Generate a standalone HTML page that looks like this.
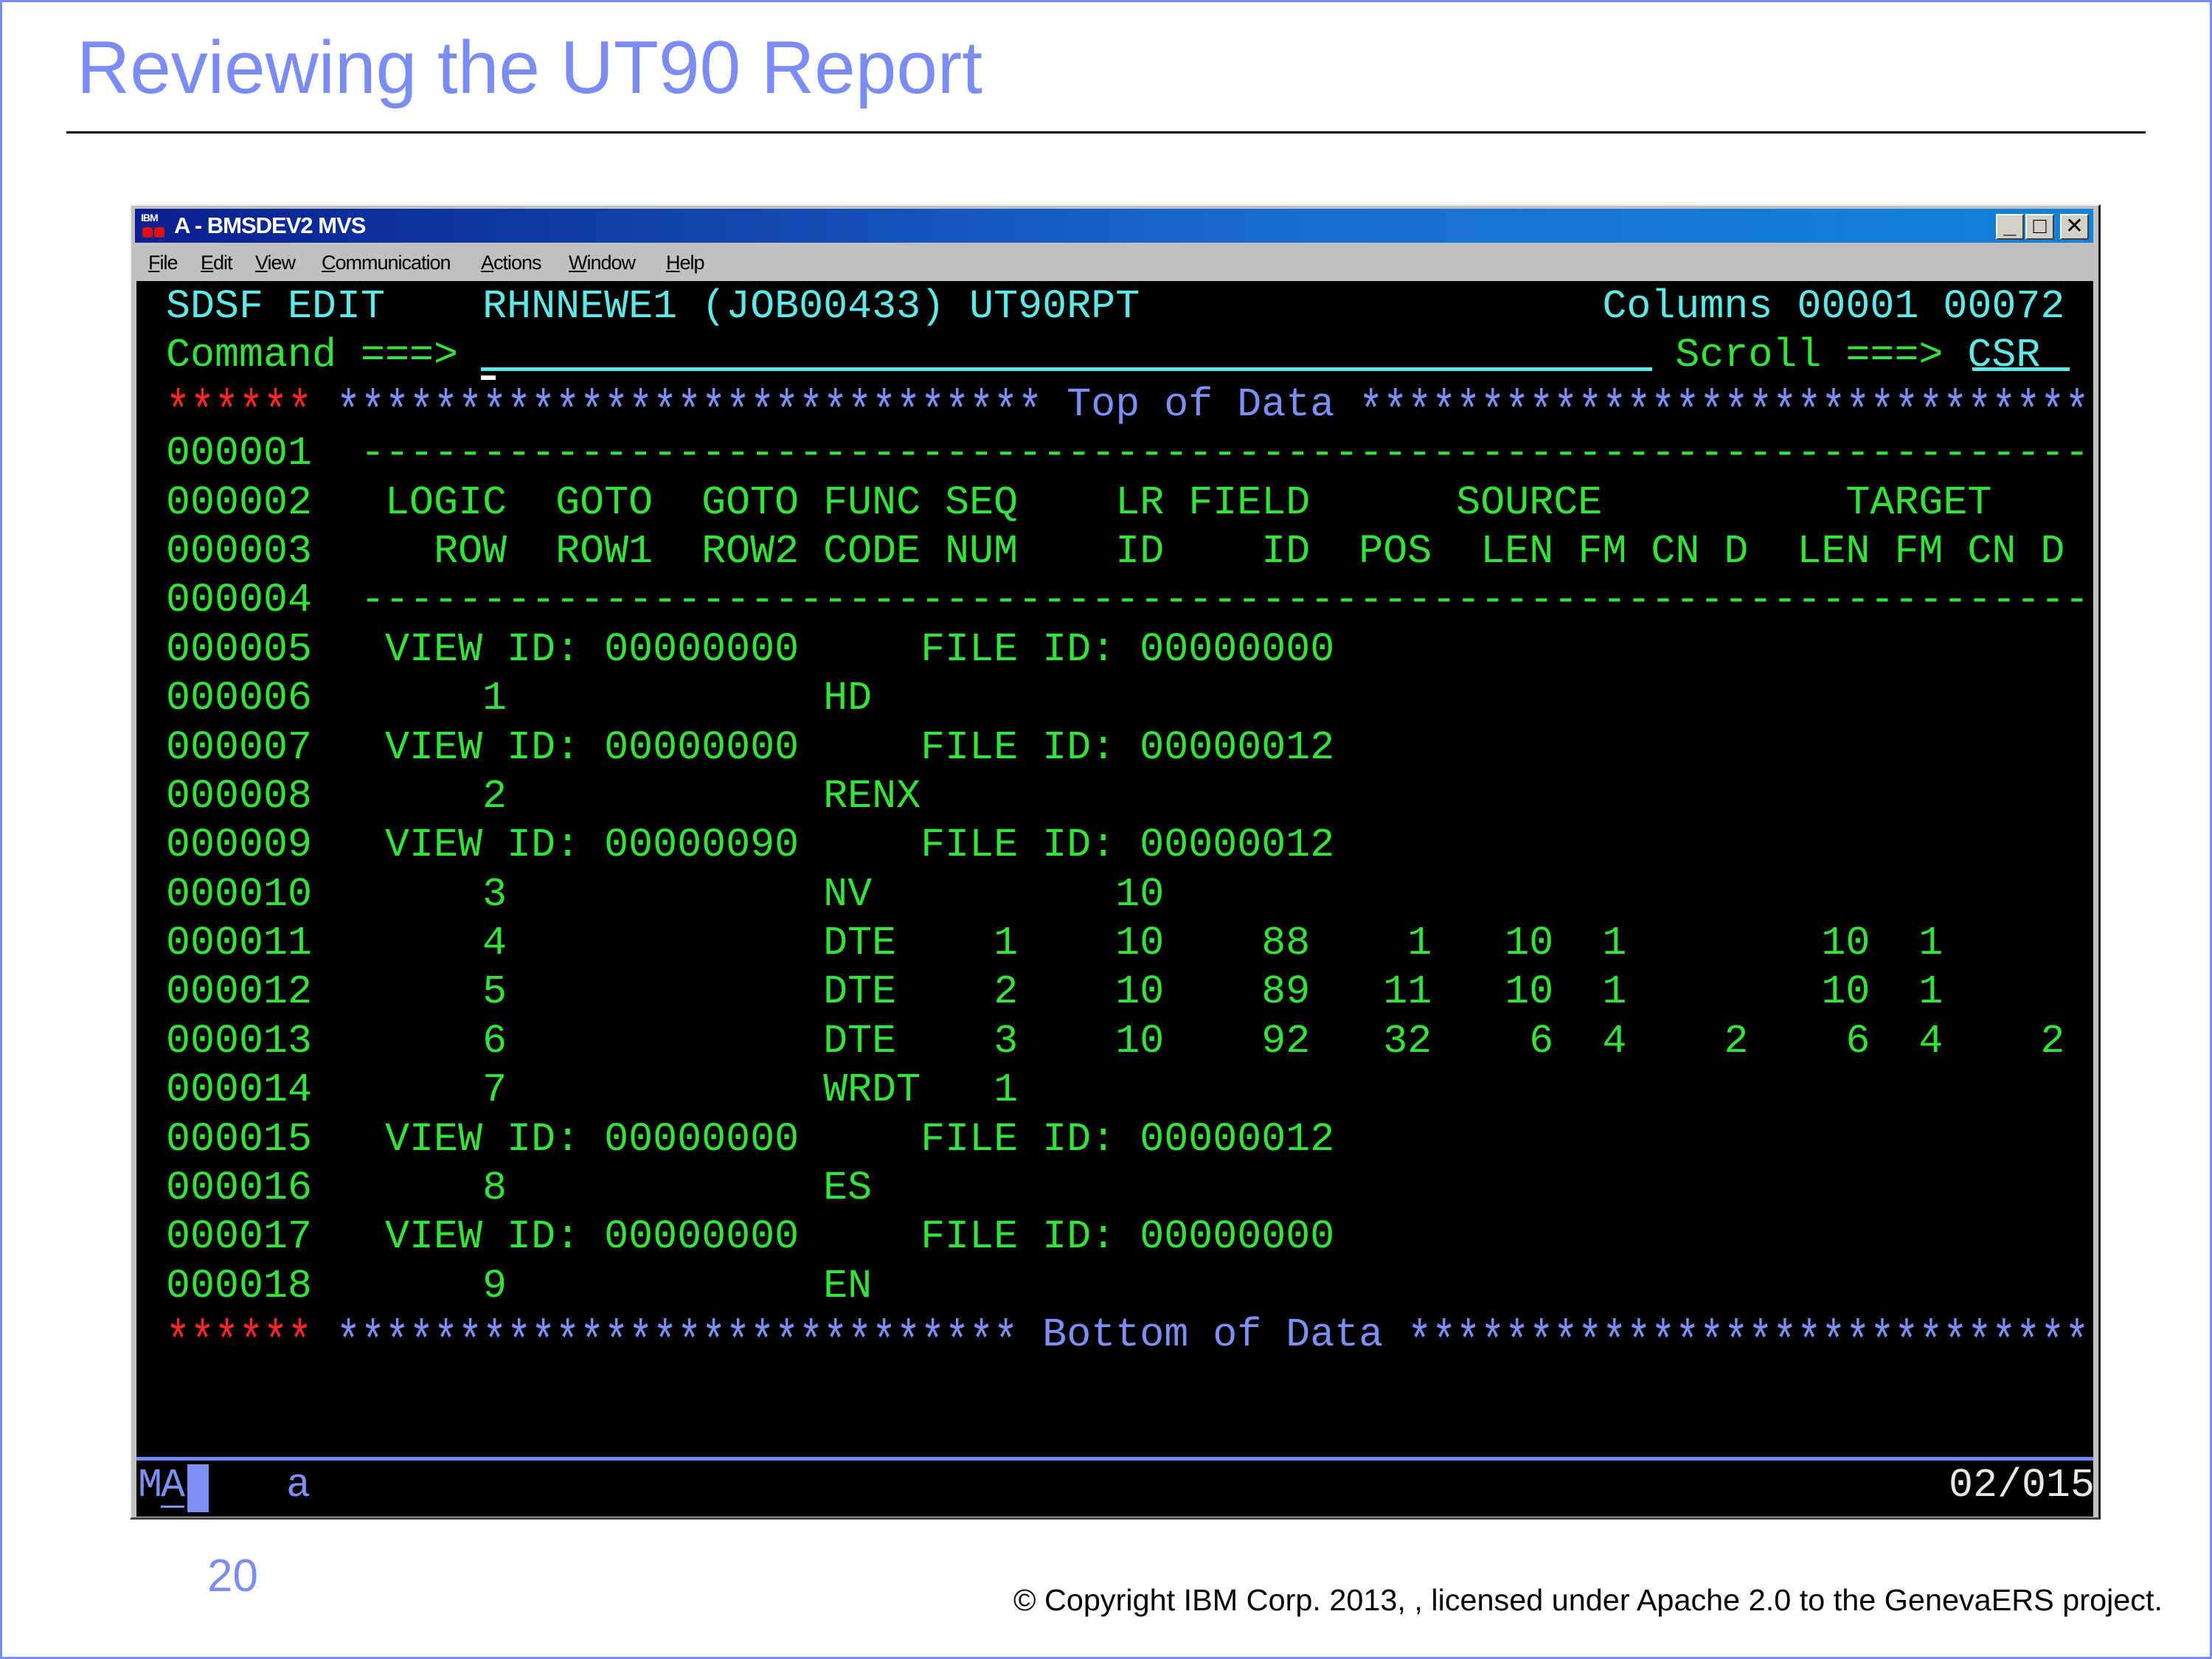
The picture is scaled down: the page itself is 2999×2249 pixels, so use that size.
<!DOCTYPE html>
<html><head><meta charset="utf-8"><style>
html,body{margin:0;padding:0}
body{width:2999px;height:2249px;position:relative;overflow:hidden;background:#fff;font-family:"Liberation Sans",sans-serif}
.frame{position:absolute;left:0;top:0;width:2993px;height:2243px;border:3px solid #7b8cf8}
.rule{position:absolute;left:90px;top:178px;width:2819px;height:3px;background:#000}
.win{position:absolute;left:176px;top:277px;width:2672px;height:1783px;background:#c0c0c0;border-right:3px solid #222;border-bottom:3px solid #444;box-sizing:border-box;border-top:2px solid #eee;border-left:2px solid #eee}
.tbar{position:absolute;left:183px;top:283px;width:2655px;height:46px;background:linear-gradient(90deg,#0a1f8f,#1a6fd0 60%,#1084d8)}
.ttl{position:absolute;left:236px;top:286px;color:#fff;font-weight:bold;font-size:31px;line-height:40px;letter-spacing:-1px}
.btn{position:absolute;top:290px;height:35px;background:#d4d0c8;border:2px solid;border-color:#fff #404040 #404040 #fff;box-sizing:border-box;font-size:30px;line-height:30px;text-align:center;color:#000;font-weight:bold}
.menu{position:absolute;top:338px;font-size:27px;line-height:36px;color:#000;letter-spacing:-1px}
.term{position:absolute;left:185px;top:381px;width:2653px;height:1675px;background:#000}
.t{position:absolute;left:192px;top:383px;font-family:"Liberation Mono",monospace;font-size:55px;line-height:66.4px}
.t div{position:relative;height:66.4px}
.t b,.st b{position:absolute;top:0;font-weight:normal;white-space:pre}
.t b.s{transform:translateY(12px) scaleY(1.35);transform-origin:0 50%}
.g{color:#33e33a}.c{color:#5ee8e8}.r{color:#ff2626}.bl{color:#7d8ef5}
.st{position:absolute;left:187px;top:1981px;width:2653px;height:66px;font-family:'Liberation Mono',monospace;font-size:55px;line-height:66px}
</style></head><body>
<div class="frame"></div>
<svg width="2999" height="2249" style="position:absolute;left:0;top:0">
<text x="104" y="126" font-family="Liberation Sans" font-size="101" fill="#7b8cf5" textLength="1228" lengthAdjust="spacingAndGlyphs">Reviewing the UT90 Report</text>
<text x="281" y="2157" font-family="Liberation Sans" font-size="62" fill="#7b8cf5">20</text>
<text x="1374" y="2183" font-family="Liberation Sans" font-size="41" fill="#000" textLength="1558" lengthAdjust="spacingAndGlyphs">© Copyright IBM Corp. 2013, , licensed under Apache 2.0 to the GenevaERS project.</text>
</svg>
<div class="rule"></div>
<div class="win"></div>
<div class="tbar"></div>
<div style="position:absolute;left:191px;top:288px;width:36px;height:36px">
<div style="position:absolute;left:0;top:0;color:#fff;font-size:14px;font-weight:bold;line-height:14px;letter-spacing:-1px">IBM</div>
<div style="position:absolute;left:2px;top:20px;width:14px;height:14px;background:#e01010;border-radius:3px"></div>
<div style="position:absolute;left:18px;top:20px;width:14px;height:14px;background:#e01010;border-radius:3px"></div>
</div>
<div class="ttl">A - BMSDEV2 MVS</div>
<div class="btn" style="left:2706px;width:38px">_</div>
<div class="btn" style="left:2746px;width:39px;font-weight:normal">□</div>
<div class="btn" style="left:2793px;width:39px;font-weight:normal">✕</div>
<div class="menu" style="left:201px"><u>F</u>ile</div>
<div class="menu" style="left:272px"><u>E</u>dit</div>
<div class="menu" style="left:346px"><u>V</u>iew</div>
<div class="menu" style="left:436px"><u>C</u>ommunication</div>
<div class="menu" style="left:652px"><u>A</u>ctions</div>
<div class="menu" style="left:771px"><u>W</u>indow</div>
<div class="menu" style="left:903px"><u>H</u>elp</div>
<div class="term"></div>
<div style="position:absolute;left:652px;top:498px;width:1588px;height:5px;background:#5ee8e8"></div>
<div style="position:absolute;left:652px;top:509px;width:20px;height:6px;background:#fff"></div>
<div style="position:absolute;left:2674px;top:498px;width:132px;height:5px;background:#5ee8e8"></div>
<div style="position:absolute;left:185px;top:1975px;width:2653px;height:5px;background:#6f8cf0"></div>
<div style="position:absolute;left:254px;top:1985px;width:29px;height:65px;background:#7d8ef5"></div>
<div style="position:absolute;left:218px;top:2041px;width:32px;height:3px;background:#7d8ef5"></div>
<div class="t">
<div><b class="c" style="left:1ch">SDSF EDIT</b><b class="c" style="left:14ch">RHNNEWE1 (JOB00433) UT90RPT</b><b class="c" style="left:60ch">Columns 00001 00072</b></div>
<div><b class="g" style="left:1ch">Command ===&gt;</b><b class="g" style="left:63ch">Scroll ===&gt;</b><b class="c" style="left:75ch">CSR</b></div>
<div><b class="r s" style="left:1ch">******</b><b class="bl s" style="left:8ch">*****************************</b><b class="bl" style="left:38ch">Top of Data</b><b class="bl s" style="left:50ch">******************************</b></div>
<div><b class="g" style="left:1ch">000001</b><b class="g" style="left:9ch">-----------------------------------------------------------------------</b></div>
<div><b class="g" style="left:1ch">000002</b><b class="g" style="left:10ch">LOGIC</b><b class="g" style="left:17ch">GOTO</b><b class="g" style="left:23ch">GOTO</b><b class="g" style="left:28ch">FUNC</b><b class="g" style="left:33ch">SEQ</b><b class="g" style="left:40ch">LR</b><b class="g" style="left:43ch">FIELD</b><b class="g" style="left:54ch">SOURCE</b><b class="g" style="left:70ch">TARGET</b></div>
<div><b class="g" style="left:1ch">000003</b><b class="g" style="left:12ch">ROW</b><b class="g" style="left:17ch">ROW1</b><b class="g" style="left:23ch">ROW2</b><b class="g" style="left:28ch">CODE</b><b class="g" style="left:33ch">NUM</b><b class="g" style="left:40ch">ID</b><b class="g" style="left:46ch">ID</b><b class="g" style="left:50ch">POS</b><b class="g" style="left:55ch">LEN</b><b class="g" style="left:59ch">FM</b><b class="g" style="left:62ch">CN</b><b class="g" style="left:65ch">D</b><b class="g" style="left:68ch">LEN</b><b class="g" style="left:72ch">FM</b><b class="g" style="left:75ch">CN</b><b class="g" style="left:78ch">D</b></div>
<div><b class="g" style="left:1ch">000004</b><b class="g" style="left:9ch">-----------------------------------------------------------------------</b></div>
<div><b class="g" style="left:1ch">000005</b><b class="g" style="left:10ch">VIEW ID: 00000000</b><b class="g" style="left:32ch">FILE ID: 00000000</b></div>
<div><b class="g" style="left:1ch">000006</b><b class="g" style="left:14ch">1</b><b class="g" style="left:28ch">HD</b></div>
<div><b class="g" style="left:1ch">000007</b><b class="g" style="left:10ch">VIEW ID: 00000000</b><b class="g" style="left:32ch">FILE ID: 00000012</b></div>
<div><b class="g" style="left:1ch">000008</b><b class="g" style="left:14ch">2</b><b class="g" style="left:28ch">RENX</b></div>
<div><b class="g" style="left:1ch">000009</b><b class="g" style="left:10ch">VIEW ID: 00000090</b><b class="g" style="left:32ch">FILE ID: 00000012</b></div>
<div><b class="g" style="left:1ch">000010</b><b class="g" style="left:14ch">3</b><b class="g" style="left:28ch">NV</b><b class="g" style="left:40ch">10</b></div>
<div><b class="g" style="left:1ch">000011</b><b class="g" style="left:14ch">4</b><b class="g" style="left:28ch">DTE</b><b class="g" style="left:35ch">1</b><b class="g" style="left:40ch">10</b><b class="g" style="left:46ch">88</b><b class="g" style="left:52ch">1</b><b class="g" style="left:56ch">10</b><b class="g" style="left:60ch">1</b><b class="g" style="left:69ch">10</b><b class="g" style="left:73ch">1</b></div>
<div><b class="g" style="left:1ch">000012</b><b class="g" style="left:14ch">5</b><b class="g" style="left:28ch">DTE</b><b class="g" style="left:35ch">2</b><b class="g" style="left:40ch">10</b><b class="g" style="left:46ch">89</b><b class="g" style="left:51ch">11</b><b class="g" style="left:56ch">10</b><b class="g" style="left:60ch">1</b><b class="g" style="left:69ch">10</b><b class="g" style="left:73ch">1</b></div>
<div><b class="g" style="left:1ch">000013</b><b class="g" style="left:14ch">6</b><b class="g" style="left:28ch">DTE</b><b class="g" style="left:35ch">3</b><b class="g" style="left:40ch">10</b><b class="g" style="left:46ch">92</b><b class="g" style="left:51ch">32</b><b class="g" style="left:57ch">6</b><b class="g" style="left:60ch">4</b><b class="g" style="left:65ch">2</b><b class="g" style="left:70ch">6</b><b class="g" style="left:73ch">4</b><b class="g" style="left:78ch">2</b></div>
<div><b class="g" style="left:1ch">000014</b><b class="g" style="left:14ch">7</b><b class="g" style="left:28ch">WRDT</b><b class="g" style="left:35ch">1</b></div>
<div><b class="g" style="left:1ch">000015</b><b class="g" style="left:10ch">VIEW ID: 00000000</b><b class="g" style="left:32ch">FILE ID: 00000012</b></div>
<div><b class="g" style="left:1ch">000016</b><b class="g" style="left:14ch">8</b><b class="g" style="left:28ch">ES</b></div>
<div><b class="g" style="left:1ch">000017</b><b class="g" style="left:10ch">VIEW ID: 00000000</b><b class="g" style="left:32ch">FILE ID: 00000000</b></div>
<div><b class="g" style="left:1ch">000018</b><b class="g" style="left:14ch">9</b><b class="g" style="left:28ch">EN</b></div>
<div><b class="r s" style="left:1ch">******</b><b class="bl s" style="left:8ch">****************************</b><b class="bl" style="left:37ch">Bottom of Data</b><b class="bl s" style="left:52ch">****************************</b></div>
</div>
<div class="st"><b style="left:0;color:#7d8ef5">M</b><b style="left:31px;color:#7d8ef5">A</b><b style="left:201px;color:#7d8ef5">a</b><b style="left:2455px;color:#e8e8e8">02/015</b></div>
</body></html>
